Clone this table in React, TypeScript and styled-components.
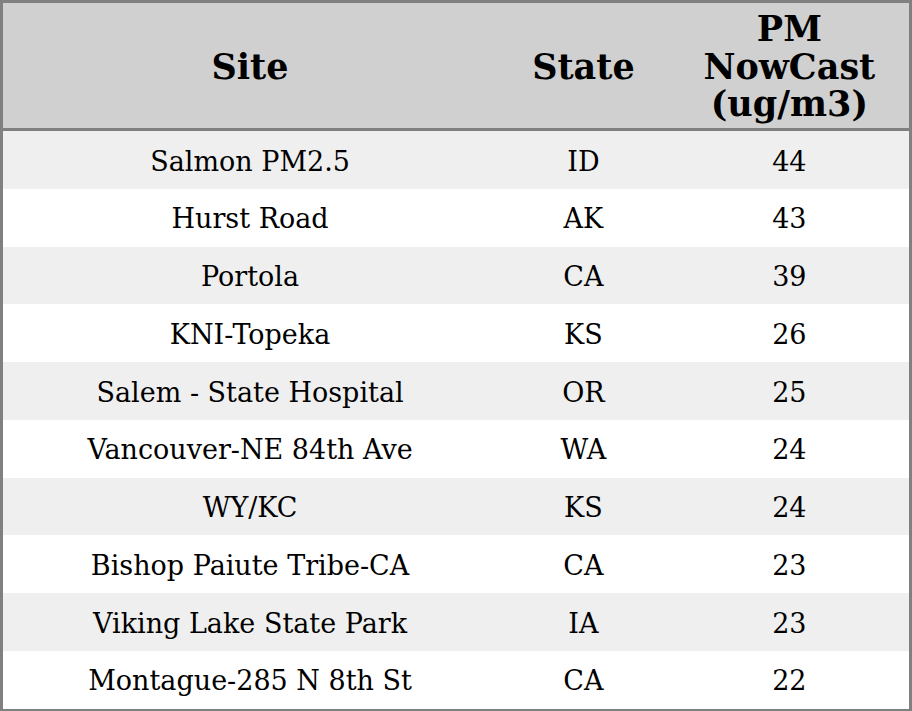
import React from "react";
import styled, { createGlobalStyle } from "styled-components";

const GlobalStyle = createGlobalStyle`
  body {
    margin: 0;
    background: #ffffff;
    font-family: "DejaVu Serif", serif;
  }
`;

const Table = styled.table`
  width: 912px;
  table-layout: fixed;
  border-collapse: collapse;
  border: 3px solid #808080;
  font-family: "DejaVu Serif", serif;
  color: #000;
`;

const Col = styled.col<{ $width: number }>`
  width: ${(p) => p.$width}px;
`;

const HeadCell = styled.th`
  box-sizing: border-box;
  background: #d0d0d0;
  font-size: 35px;
  line-height: 37.5px;
  font-weight: bold;
  padding: 7px 0 5.5px;
  text-align: center;
  border-bottom: 3px solid #808080;
`;

const Row = styled.tr<{ $shaded: boolean }>`
  background: ${(p) => (p.$shaded ? "#efefef" : "#ffffff")};
`;

const Cell = styled.td`
  box-sizing: border-box;
  font-size: 27px;
  line-height: 31.75px;
  text-align: center;
  padding: 14.5px 0 11.5px;
`;

const rows: [string, string, number][] = [
  ["Salmon PM2.5", "ID", 44],
  ["Hurst Road", "AK", 43],
  ["Portola", "CA", 39],
  ["KNI-Topeka", "KS", 26],
  ["Salem - State Hospital", "OR", 25],
  ["Vancouver-NE 84th Ave", "WA", 24],
  ["WY/KC", "KS", 24],
  ["Bishop Paiute Tribe-CA", "CA", 23],
  ["Viking Lake State Park", "IA", 23],
  ["Montague-285 N 8th St", "CA", 22],
];

const App: React.FC = () => {
  return (
    <>
      <GlobalStyle />
      <Table>
        <colgroup>
          <Col $width={494} />
          <Col $width={172} />
          <Col $width={240} />
        </colgroup>
        <thead>
          <tr>
            <HeadCell>Site</HeadCell>
            <HeadCell>State</HeadCell>
            <HeadCell>
              PM
              <br />
              NowCast
              <br />
              (ug/m3)
            </HeadCell>
          </tr>
        </thead>
        <tbody>
          {rows.map(([site, state, value], i) => (
            <Row key={site} $shaded={i % 2 === 0}>
              <Cell>{site}</Cell>
              <Cell>{state}</Cell>
              <Cell>{value}</Cell>
            </Row>
          ))}
        </tbody>
      </Table>
    </>
  );
};

export default App;
